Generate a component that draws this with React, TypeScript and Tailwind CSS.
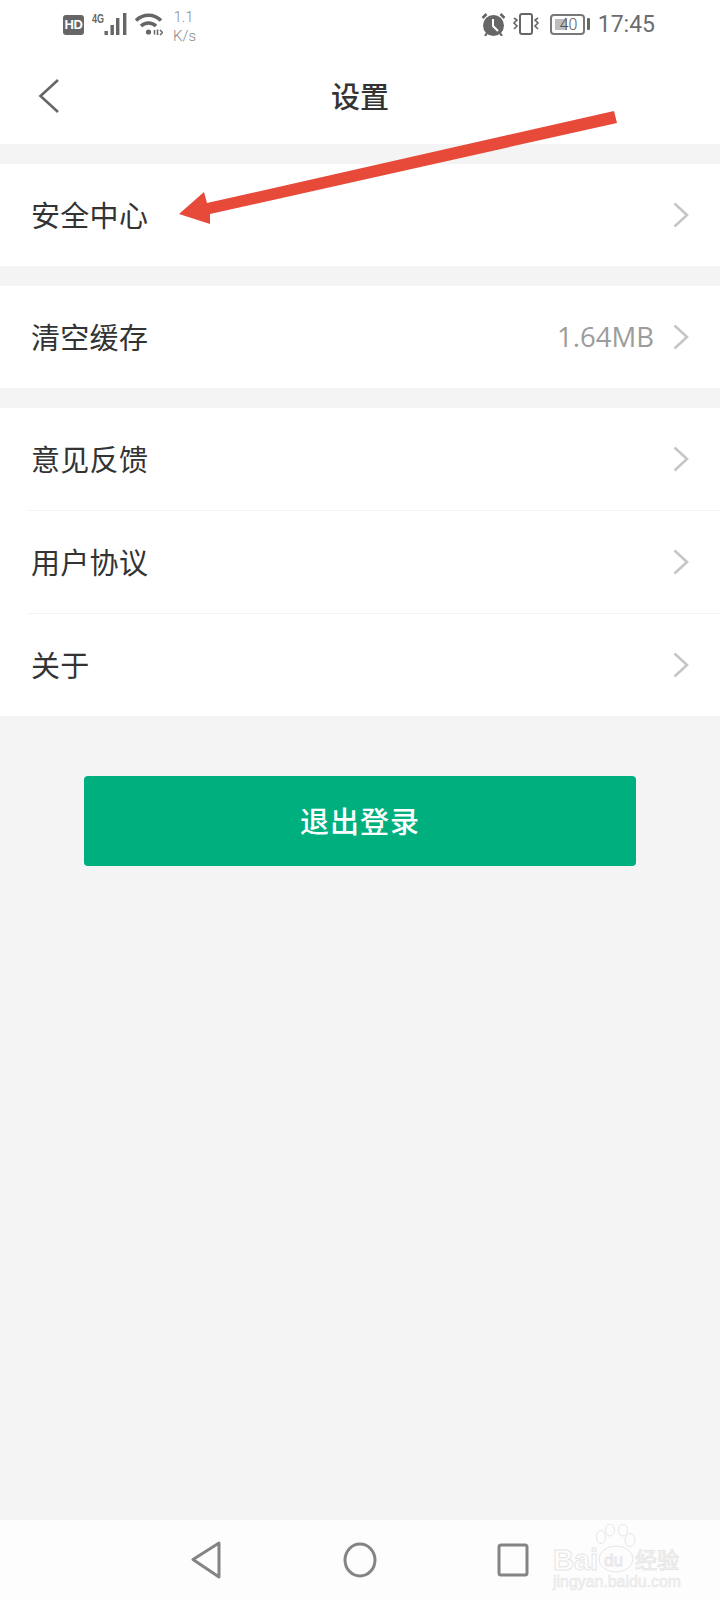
import React from 'react';

const cjk = '[font-family:"Noto_Sans_CJK_SC","Noto_Sans",sans-serif]';

const Chevron = () => (
  <svg width="18" height="28" viewBox="0 0 18 28" fill="none" className="shrink-0">
    <path d="M2.5 2.5 L15 14 L2.5 25.5" stroke="#c6c6c6" strokeWidth="2.6" />
  </svg>
);

const Row = ({ label, value, divider, tall }: { label: string; value?: string; divider?: boolean; tall?: boolean }) => (
  <div className="pl-7 bg-white">
    <div className={`flex items-center pr-[30px] pl-[3px] ${tall ? 'h-[103px]' : 'h-[102px]'} ${divider ? 'border-b border-[#f3f3f3]' : ''}`}>
      <span className={`text-[29px] tracking-[0.3px] text-[#333333] ${cjk}`}>{label}</span>
      <span className="ml-auto mr-[18px] text-[27.5px] text-[#9c9c9c] [font-family:'Open_Sans',sans-serif]">{value}</span>
      <Chevron />
    </div>
  </div>
);

const StatusBar = () => (
  <div className="flex items-start h-12 bg-white pt-[13px] pl-[63px] pr-[65px] text-[#666666]">
    <div className="mt-[2px] w-[21px] h-5 rounded-[3px] bg-[#666666] text-white text-[13px] leading-5 text-center font-bold tracking-[-0.5px] [font-family:'Liberation_Sans',sans-serif]">
      HD
    </div>
    <svg width="37" height="28" viewBox="0 0 37 28" className="ml-[8px] -mt-[4px]" fill="#666666">
      <text x="0" y="14" fontSize="13" fontWeight="700" fontFamily="Liberation Sans" textLength="12" lengthAdjust="spacingAndGlyphs">4G</text>
      <rect x="12.5" y="22" width="3.4" height="4" />
      <rect x="18.5" y="16" width="3.4" height="10" />
      <rect x="24" y="9" width="3.4" height="17" />
      <rect x="31" y="4" width="3.4" height="22" />
    </svg>
    <svg width="28" height="24" viewBox="0 0 28 24" className="ml-[6px]" fill="none" stroke="#666666" strokeWidth="3.4">
      <path d="M1 7.5 C8 0.5 19 0.5 26 7.5" />
      <path d="M6 13 C10 9 17 9 21 13" />
      <circle cx="13.5" cy="19" r="2.6" fill="#666666" stroke="none" />
      <path d="M19.5 17 L19.5 21.5 M22.5 16.5 L22.5 22 M25 17 L27.5 19.5 L25 22" strokeWidth="1.5" />
    </svg>
    <div className="ml-[10px] -mt-[5px] text-[15px] leading-[19px] text-[#8a8a8a] [font-family:'Roboto',sans-serif] font-light">
      <div className="text-center pr-[2px]">1.1</div>
      <div>K/s</div>
    </div>
    <svg width="25" height="23" viewBox="0 0 25 23" className="ml-auto">
      <circle cx="12.5" cy="12.5" r="10.5" fill="#666666" />
      <path d="M12 6 L12 13 L17 18" stroke="#fff" strokeWidth="2" fill="none" />
      <path d="M1.5 5 L5.5 1 M23.5 5 L19.5 1" stroke="#666666" strokeWidth="2.6" />
      <path d="M6 20 L4 23 M19 20 L21 23" stroke="#666666" strokeWidth="2.2" />
    </svg>
    <svg width="28" height="23" viewBox="0 0 28 23" className="ml-[6px]" fill="none" stroke="#666666">
      <rect x="8" y="1" width="12" height="20" rx="2" strokeWidth="2" />
      <path d="M2 5 L5 7 L2 10 L5 13 L2 16" strokeWidth="1.6" />
      <path d="M26 5 L23 7 L26 10 L23 13 L26 16" strokeWidth="1.6" />
    </svg>
    <div className="relative ml-[10px] mt-[1px] w-[35px] h-[21px] rounded-[4px] border-2 border-[#777777] overflow-hidden">
      <div className="absolute left-[3px] top-[3px] bottom-[3px] w-[12px] bg-[#bdbdbd]" />
      <span className="absolute left-[8px] top-0 text-[16px] leading-[17px] font-light text-[#555555] [font-family:'Roboto',sans-serif]">40</span>
    </div>
    <div className="ml-[2px] mt-[5px] w-[3px] h-[12px] rounded-[1px] bg-[#666666]" />
    <div className="ml-[8px] -mt-[1px] text-[23px] leading-[26px] text-[#6c6c6c] [font-family:'Roboto',sans-serif]">17:45</div>
  </div>
);

export default function App() {
  return (
    <div className="relative flex flex-col w-[720px] h-[1600px] bg-[#f4f4f4] overflow-hidden">
      <StatusBar />
      <div className="relative flex items-center justify-center h-24 bg-white">
        <button className="absolute left-[38px] top-[30px]">
          <svg width="24" height="36" viewBox="0 0 24 36" fill="none">
            <path d="M20 2 L2.5 18 L20 34" stroke="#666666" strokeWidth="2.6" />
          </svg>
        </button>
        <h1 className={`text-[29px] font-medium text-[#333333] ${cjk}`}>设置</h1>
      </div>

      <div className="mt-5">
        <Row label="安全中心" />
      </div>
      <div className="mt-5">
        <Row label="清空缓存" value="1.64MB" />
      </div>
      <div className="mt-5">
        <Row label="意见反馈" divider tall />
        <Row label="用户协议" divider tall />
        <Row label="关于" />
      </div>

      <button className={`mt-[60px] mx-auto w-[552px] h-[90px] rounded-[4px] bg-[#00af7e] text-white text-[29px] font-medium tracking-[1px] ${cjk}`}>
        退出登录
      </button>

      <div className="relative flex items-center mt-auto h-20 bg-[#fdfdfd]">
        <svg width="32" height="38" viewBox="0 0 32 38" className="ml-[190px]" fill="none" stroke="#848484" strokeWidth="3" strokeLinejoin="round">
          <path d="M29 2 L3 18.5 L29 36 Z" />
        </svg>
        <svg width="34" height="36" viewBox="0 0 34 36" className="ml-[121px]" fill="none" stroke="#848484" strokeWidth="3">
          <ellipse cx="17" cy="18" rx="15" ry="16" />
        </svg>
        <svg width="32" height="34" viewBox="0 0 32 34" className="ml-[120px]" fill="none" stroke="#848484" strokeWidth="3" strokeLinejoin="round">
          <rect x="2" y="2" width="28" height="30" rx="2" />
        </svg>
        {/* watermark */}
        <svg width="132" height="70" viewBox="0 0 132 70" className="absolute left-[552px] top-[4px]" fill="#fdfdfd" stroke="#e6e6e6" strokeWidth="1">
          <ellipse cx="49" cy="13" rx="4.5" ry="6.5" />
          <ellipse cx="58" cy="6" rx="4.5" ry="6" />
          <ellipse cx="71" cy="6" rx="4.5" ry="6" />
          <ellipse cx="78" cy="16" rx="5" ry="6.5" />
          <ellipse cx="64" cy="35" rx="17" ry="13" />
          <text x="1" y="46" fontSize="30" fontWeight="700" fontFamily="Liberation Sans" textLength="45" lengthAdjust="spacingAndGlyphs">Bai</text>
          <text x="52" y="42" fontSize="17" fontFamily="Liberation Sans">du</text>
          <text x="83" y="44" fontSize="22" fontFamily="Noto Sans CJK SC">经验</text>
          <text x="1" y="63" fontSize="16" fontFamily="Liberation Sans" strokeWidth="0.5" fill="#f1f1f1" textLength="128" lengthAdjust="spacingAndGlyphs">jingyan.baidu.com</text>
        </svg>
      </div>

      {/* red annotation arrow */}
      <svg width="720" height="260" viewBox="0 0 720 260" className="absolute left-0 top-0 pointer-events-none">
        <polygon points="179,214 204,192 207,203 614,111 617,123 210,214 210,224" fill="#e84a3a" />
      </svg>
    </div>
  );
}
